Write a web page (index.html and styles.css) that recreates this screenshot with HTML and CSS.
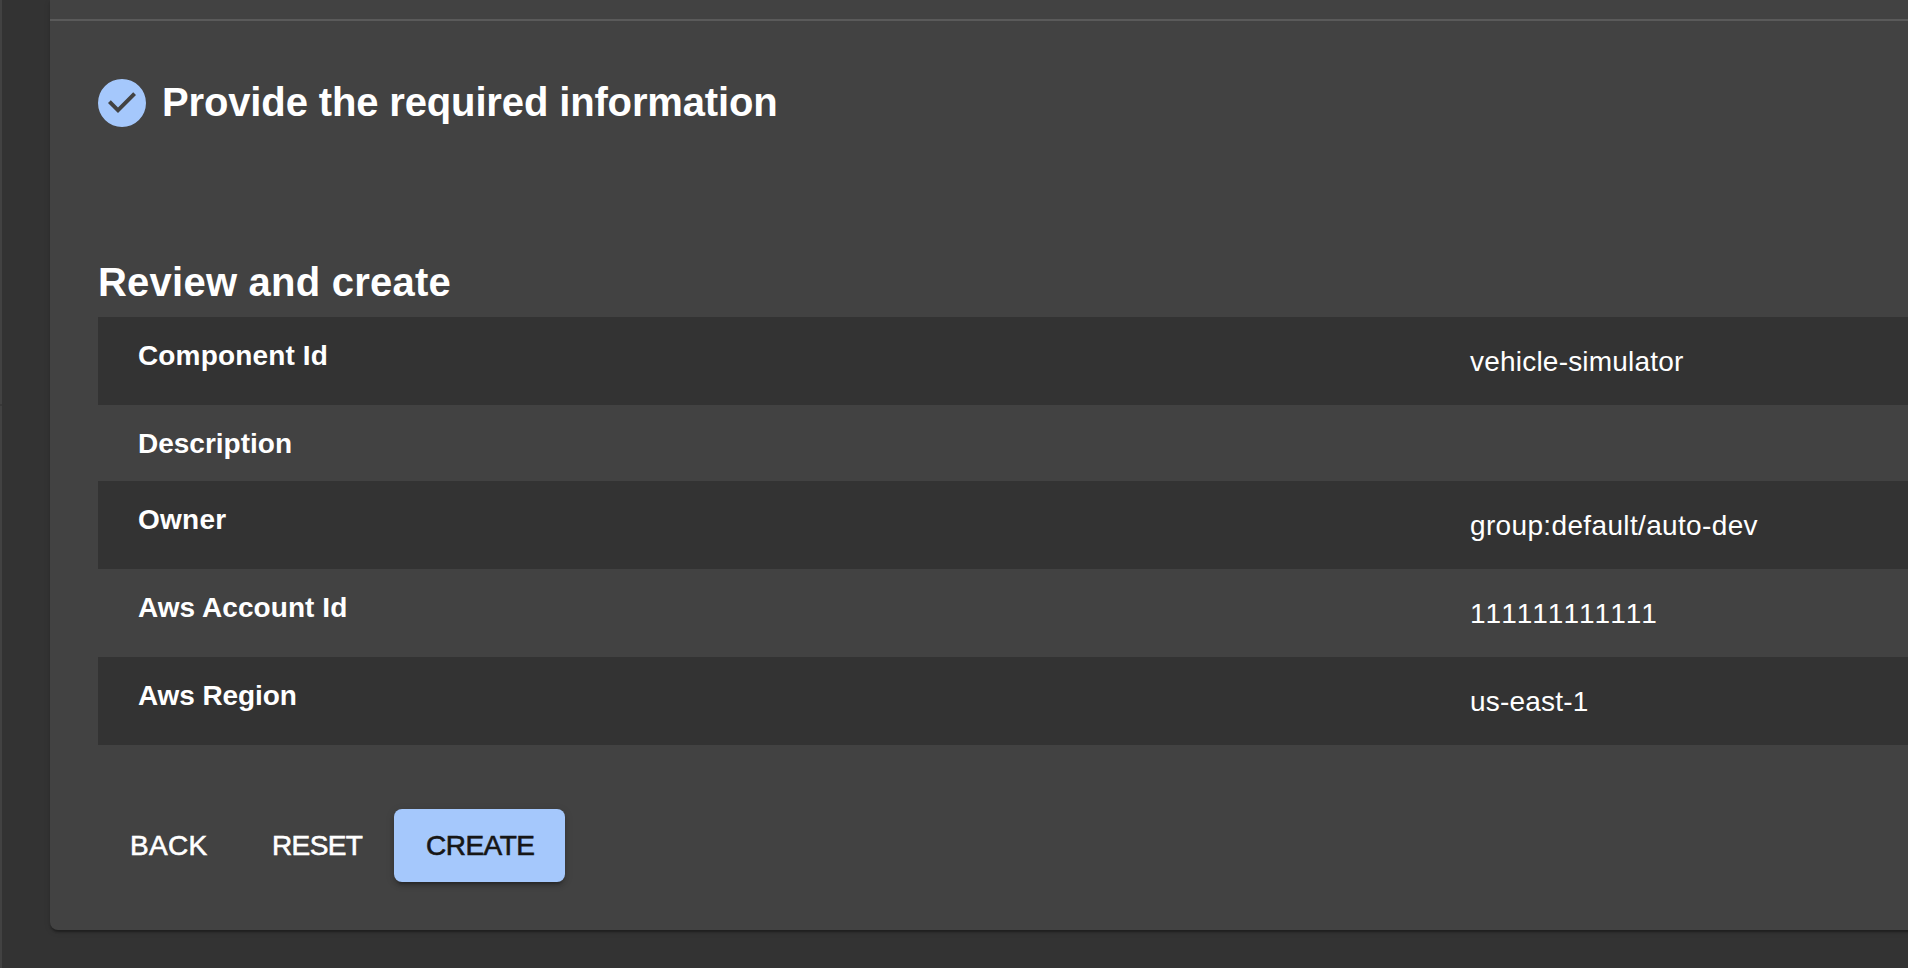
FILE: index.html
```html
<!DOCTYPE html>
<html lang="en">
<head>
<meta charset="utf-8">
<title>Review and create</title>
<link rel="stylesheet" href="styles.css">
</head>
<body>
<div class="page">
  <div class="rail"><span class="rail-mark"></span></div>
  <main class="card">
    <div class="previous"></div>
    <section class="step">
      <svg class="step-icon" viewBox="0 0 24 24" aria-hidden="true"><path d="M12 0a12 12 0 1 0 0 24 12 12 0 0 0 0-24zm-2 17l-5-5 1.4-1.4 3.6 3.6 7.6-7.6L19 8l-9 9z"/></svg>
      <h2 class="title step-title">Provide the required information</h2>
    </section>
    <section class="review">
      <h2 class="title review-title">Review and create</h2>
      <dl class="table">
        <div class="row"><dt class="label component">Component Id</dt><dd class="value simulator">vehicle-simulator</dd></div>
        <div class="row row-empty"><dt class="label description">Description</dt><dd class="value"></dd></div>
        <div class="row"><dt class="label owner">Owner</dt><dd class="value group">group:default/auto-dev</dd></div>
        <div class="row"><dt class="label account">Aws Account Id</dt><dd class="value number">111111111111</dd></div>
        <div class="row"><dt class="label region">Aws Region</dt><dd class="value east">us-east-1</dd></div>
      </dl>
      <div class="actions">
        <button class="button back">BACK</button>
        <button class="button reset">RESET</button>
        <button class="button create">CREATE</button>
      </div>
    </section>
  </main>
</div>
</body>
</html>
```
FILE: styles.css
```css
* { box-sizing: border-box; }
body {
  margin: 0;
  overflow: hidden;
  background: #333;
  color: #fff;
  font-family: "Liberation Sans", Arial, sans-serif;
}
.page { display: flex; height: 968px; }
.rail { width: 2px; margin-right: 48px; background: #424242; padding-top: 404px; }
.rail-mark { display: block; height: 2px; background: #383838; }
.card {
  flex: 1;
  height: 930px;
  margin-right: -20px;
  background: #424242;
  border-radius: 0 0 8px 8px;
  box-shadow: 0 4px 2px -2px rgba(0,0,0,.2), 0 2px 2px rgba(0,0,0,.14), 0 2px 6px rgba(0,0,0,.12);
}
.previous { height: 21px; border-bottom: 2px solid #5a5a5a; }
.step { display: flex; align-items: center; gap: 16px; padding: 58px 48px 0; }
.step-icon { width: 48px; height: 48px; fill: #a5c8fc; }
.title { margin: 0; font-size: 40px; font-weight: 700; line-height: 48px; white-space: nowrap; }
.step-title { height: 48px; line-height: 46px; letter-spacing: -.14px; }
.review { padding: 131px 0 0 48px; }
.review-title { letter-spacing: .23px; }
.table { margin: 11px 0 0; }
.row { display: grid; grid-template-columns: 1332px 1fr; height: 88px; padding-left: 40px; font-size: 28px; line-height: 40px; }
.row:nth-child(odd) { background: #333; }
.row-empty { height: 76px; }
.label { padding-top: 19px; font-weight: 700; }
.value { margin: 0; padding-top: 25px; }
.component { letter-spacing: .15px; }
.owner { letter-spacing: .25px; }
.account { letter-spacing: .06px; }
.region { letter-spacing: -.1px; }
.simulator { letter-spacing: .21px; }
.group { letter-spacing: .35px; }
.number { font-kerning: none; }
.east { letter-spacing: .2px; }
.actions { display: flex; padding-top: 64px; }
.button {
  height: 73px;
  padding: 1px 0 0 32px;
  border: 0;
  border-radius: 8px;
  background: none;
  color: #fff;
  font: 28px/40px "Liberation Sans", Arial, sans-serif;
  text-align: left;
  -webkit-text-stroke: .6px currentColor;
}
.back { width: 142px; letter-spacing: .3px; }
.reset { width: 154px; letter-spacing: -.6px; }
.create {
  width: 171px;
  background: #a5c8fc;
  color: #161616;
  letter-spacing: -.5px;
  box-shadow: 0 6px 2px -4px rgba(0,0,0,.2), 0 4px 4px rgba(0,0,0,.14), 0 2px 10px rgba(0,0,0,.12);
}
```
